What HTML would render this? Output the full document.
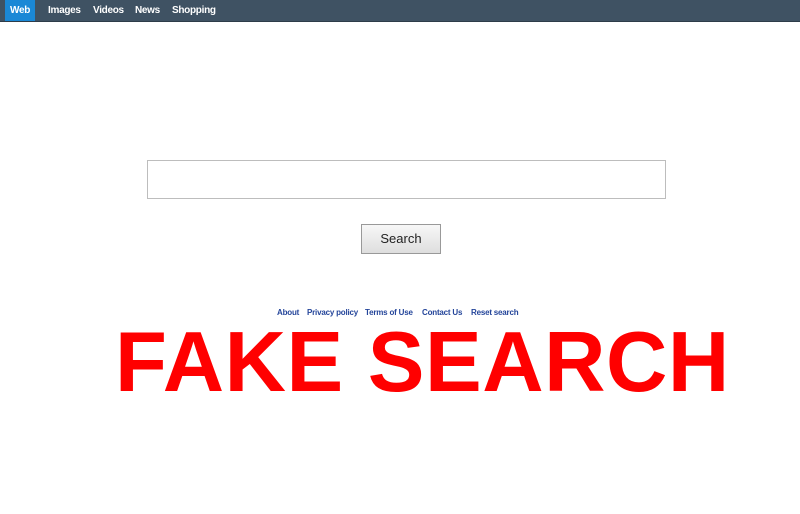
<!DOCTYPE html>
<html><head><style>
body{margin:0;width:800px;height:514px;background:#fff;font-family:"Liberation Sans",Arial,sans-serif;position:relative;overflow:hidden}
.nav{position:absolute;left:0;top:0;width:800px;height:21px;background:#3f5263;border-bottom:1px solid #2d3c49}
.nav span{position:absolute;top:0;height:21px;line-height:21px;color:#fff;font-size:10px;font-weight:bold;letter-spacing:-0.3px}
.web{left:5px;width:30px;background:#1a88d6;text-align:center}
.box{position:absolute;left:147px;top:160px;width:517px;height:37px;border:1px solid #bdbdbd;background:#fff}
.btn{position:absolute;left:361px;top:224px;width:78px;height:28px;border:1px solid #999;background:linear-gradient(#f7f7f7,#dedede);font-size:13px;text-align:center;line-height:28px;color:#222}
.links{position:absolute;top:308px;font-size:8px;font-weight:bold;color:#24459a;letter-spacing:-0.2px}
.links span{position:absolute;white-space:nowrap}
.fake{position:absolute;left:115px;top:313px;font-size:85px;font-weight:bold;color:#ff0000;letter-spacing:0.5px;white-space:nowrap;line-height:100px}
</style></head><body>
<div class="nav">
<span class="web">Web</span>
<span style="left:48px">Images</span>
<span style="left:93px">Videos</span>
<span style="left:135px">News</span>
<span style="left:172px">Shopping</span>
</div>
<div class="box"></div>
<div class="btn">Search</div>
<div class="links">
<span style="left:277px">About</span>
<span style="left:307px">Privacy policy</span>
<span style="left:365px">Terms of Use</span>
<span style="left:422px">Contact Us</span>
<span style="left:471px">Reset search</span>
</div>
<div class="fake">FAKE SEARCH</div>
</body></html>
